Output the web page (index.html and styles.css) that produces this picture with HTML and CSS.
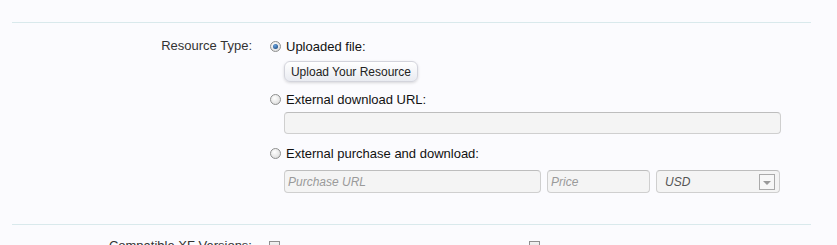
FILE: index.html
```html
<!DOCTYPE html>
<html lang="en">
<head>
  <meta charset="UTF-8" />
  <title>Add Resource</title>
  <link rel="stylesheet" href="styles.css">
</head>
<body>
  <form class="form">
    <hr class="form-hr" />

    <dl class="ctrl-unit">
      <dt>Resource Type:</dt>
      <dd>
        <label class="choice">
          <input type="radio" name="type" class="radio" checked />
          Uploaded file:
        </label>
        <div class="choice-body">
          <button type="button" class="button">Upload Your Resource</button>
        </div>

        <label class="choice choice-gap">
          <input type="radio" name="type" class="radio" />
          External download URL:
        </label>
        <div class="choice-body">
          <input type="text" class="text-ctrl text-wide" />
        </div>

        <label class="choice choice-gap2">
          <input type="radio" name="type" class="radio" />
          External purchase and download:
        </label>
        <div class="choice-body purchase-row">
          <input type="text" class="text-ctrl purchase-url" placeholder="Purchase URL" />
          <input type="text" class="text-ctrl price" placeholder="Price" />
          <div class="text-ctrl select">
            <span>USD</span>
            <span class="select-arrow"></span>
          </div>
        </div>
      </dd>
    </dl>

    <hr class="form-hr hr-bottom" />

    <dl class="ctrl-unit versions">
      <dt>Compatible XF Versions:</dt>
      <dd class="version-list">
        <span class="checkbox"></span>
        <span class="checkbox second"></span>
      </dd>
    </dl>
  </form>
</body>
</html>
```

FILE: styles.css
```css
* {
  box-sizing: border-box;
}

body {
  margin: 0;
  background: #fbfbfe;
  font-family: 'Liberation Sans', Arial, sans-serif;
  font-size: 13px;
  color: #111;
  height: 245px;
  overflow: hidden;
}

.form {
  padding: 0 26px 0 12px;
}

.form-hr {
  border: none;
  border-top: 1px solid #d9e9ec;
  margin: 22px 0 0;
  height: 0;
}

.hr-bottom {
  margin-top: 31px;
}

.ctrl-unit {
  display: flex;
  margin: 0;
  padding-top: 14px;
}

.ctrl-unit dt {
  width: 255px;
  flex-shrink: 0;
  text-align: right;
  padding-right: 15px;
  color: #333;
  line-height: 18px;
}

.ctrl-unit dd {
  margin: 0;
  width: 527px;
}

.choice {
  display: flex;
  align-items: center;
  height: 18px;
  color: #111;
  gap: 5px;
}

.choice-gap {
  margin-top: 8px;
}

.choice-gap2 {
  margin-top: 10px;
}

.radio {
  appearance: none;
  -webkit-appearance: none;
  width: 11px;
  height: 11px;
  margin: 0 0 0 3px;
  border-radius: 50%;
  border: 1px solid #8e8f8f;
  background: radial-gradient(circle at 40% 35%, #ffffff 0%, #e6e6e6 60%, #cfcfcf 100%);
  position: relative;
}

.radio:checked::after {
  content: '';
  position: absolute;
  left: 2px;
  top: 2px;
  width: 5px;
  height: 5px;
  border-radius: 50%;
  background: radial-gradient(circle at 40% 35%, #6aa3de 0%, #1c4d86 80%);
}

.choice-body {
  padding-left: 17px;
}

.button {
  margin-top: 6px;
  height: 21px;
  width: 134px;
  padding: 0;
  font-family: inherit;
  font-size: 12px;
  color: #222;
  border: 1px solid #d3d4dc;
  border-radius: 6px;
  background: linear-gradient(#ffffff, #e9ebf1);
  box-shadow: 0 1px 3px rgba(0, 0, 0, 0.15);
}

.text-ctrl {
  height: 22px;
  border: 1px solid #cfcfcf;
  border-top-color: #bdbdbd;
  border-radius: 4px;
  background: #f4f4f4;
  font-family: inherit;
  font-size: 12px;
  padding: 0 3px;
  color: #333;
}

.text-ctrl::placeholder {
  color: #9a9a9a;
  font-style: italic;
}

.text-wide {
  display: block;
  margin-top: 4px;
  width: 497px;
}

.purchase-row {
  display: flex;
  gap: 6px;
  margin-top: 8px;
}

.purchase-row .text-ctrl {
  height: 23px;
}

.purchase-url {
  width: 257px;
}

.price {
  width: 103px;
}

.select {
  width: 124px;
  display: flex;
  align-items: center;
  justify-content: space-between;
  padding: 0 4px 0 8px;
  font-style: italic;
  color: #555;
}

.select-arrow {
  width: 16px;
  height: 16px;
  border: 1px solid #aaa;
  background: #f7f7f7;
  position: relative;
}

.select-arrow::after {
  content: '';
  position: absolute;
  left: 3px;
  top: 6px;
  border-left: 4px solid transparent;
  border-right: 4px solid transparent;
  border-top: 4px solid #999;
}

.versions {
  padding-top: 12px;
}

.version-list {
  display: flex;
  padding-top: 4px;
}

.checkbox {
  width: 11px;
  height: 11px;
  border: 1px solid #8f8f8f;
  background: linear-gradient(#f2f2f2, #d9d9d9);
  margin-left: 2px;
}

.checkbox.second {
  margin-left: 249px;
}
```
